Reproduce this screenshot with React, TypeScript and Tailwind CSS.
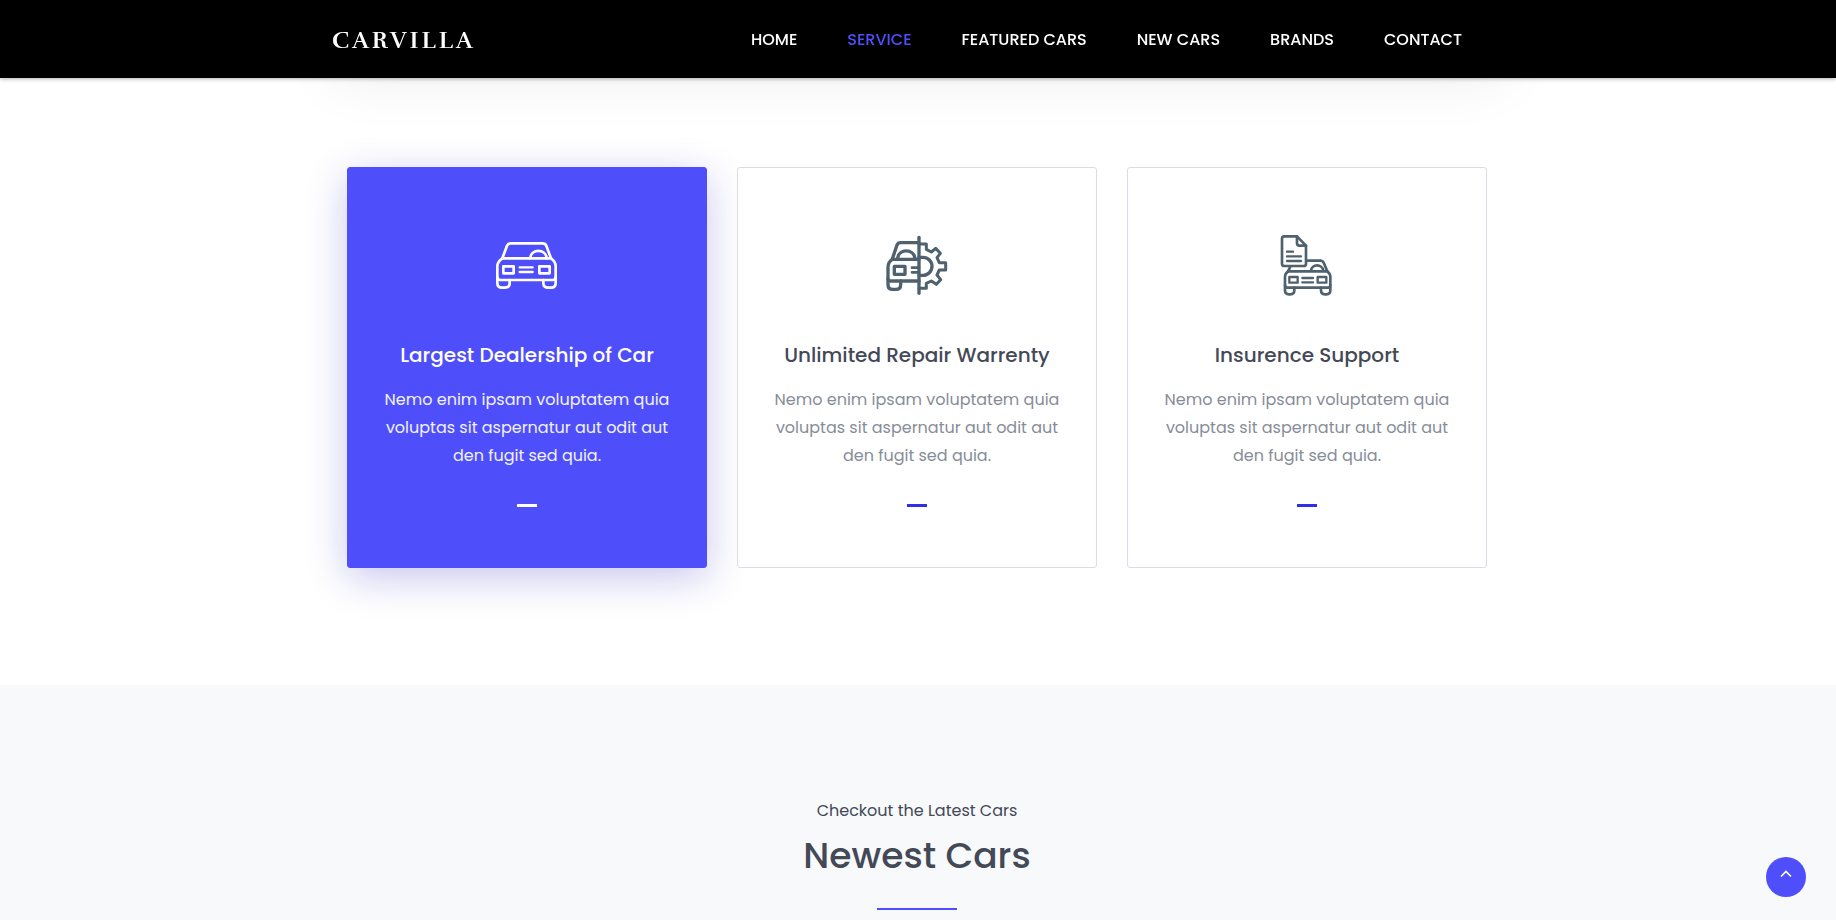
import type { ReactNode } from "react";

const navItems = [
  { label: "home", href: "#home" },
  { label: "service", href: "#service", active: true },
  { label: "featured cars", href: "#featured-cars" },
  { label: "new cars", href: "#new-cars" },
  { label: "brands", href: "#brand" },
  { label: "contact", href: "#contact" },
];

function IconFrame({ children, stroke }: { children: ReactNode; stroke: number }) {
  return (
    <svg
      viewBox="78 45 186 186"
      className="size-[62px]"
      fill="none"
      stroke="currentColor"
      strokeWidth={stroke}
      strokeLinecap="round"
      strokeLinejoin="round"
      aria-hidden="true"
    >
      {children}
    </svg>
  );
}

function CarIcon() {
  return (
    <IconFrame stroke={8}>
      <path d="M97 115 L111 77 Q114 70 122 70 H218 Q226 70 229 77 L243 115" />
      <path d="M97 115 H243 C252 121 257 129 257 139 V172 Q257 180 248 180 H91 Q82 180 82 172 V139 C82 129 88 121 97 115 Z" />
      <path d="M82 172 V189 Q82 203 96 203 H104 Q119 203 119 189 V180 M257 172 V189 Q257 203 243 203 H235 Q220 203 220 189 V180" />
      <path d="M181 115 C182 85 228 85 230 115" />
      <path d="M100 139 H131 V160 H100 Z M208 139 H239 V160 H208 Z" />
      <path d="M149 142 H188 M149 156 H188" strokeWidth="7" />
    </IconFrame>
  );
}

function RepairIcon() {
  return (
    <IconFrame stroke={10}>
      <path d="M97 117 L111 75 Q114 68 122 68 H177" />
      <path d="M177 118 H97 Q84 126 84 142 V176 Q84 183 91 183 H177" />
      <path d="M84 176 V194 Q84 208 98 208 H108 Q122 208 122 194 V183" />
      <path d="M113 115 C116 85 161 85 165 115" />
      <path d="M103 139 H135 V163 H103 Z" />
      <path d="M156 143 H177 M156 157 H177" strokeWidth="8" />
      <path d="M177 52 V220" />
      <path d="M177 72 H199 V88 L214 96 L227 85 L241 100 L231 113 L238 128 H257 V150 H238 L231 165 L242 179 L229 193 L214 183 L199 190 V205 H177" strokeWidth="9" />
      <path d="M177 112 H189 A27 27 0 0 1 189 166 H177" />
    </IconFrame>
  );
}

function InsuranceIcon() {
  return (
    <IconFrame stroke={8}>
      <path d="M141 49 H103 Q96 49 96 56 V131 Q96 138 103 138 H161 Q168 138 168 131 V77 Z" />
      <path d="M141 49 V70 Q141 77 148 77 H168" />
      <path d="M111 95 H129 M111 109 H153 M111 123 H153" strokeWidth="7" />
      <path d="M170 122 H212 Q218 122 221 128 L232 154 M121 140 L114 154" />
      <path d="M114 154 H232 Q241 161 241 171 V196 Q241 203 234 203 H112 Q105 203 105 196 V171 Q105 161 114 154 Z" />
      <path d="M105 196 V211 Q105 223 117 223 H121 Q133 223 133 211 V203 M241 196 V211 Q241 223 229 223 H225 Q213 223 213 211 V203" />
      <path d="M183 152 C185 131 217 131 220 152" />
      <path d="M118 171 H143 V188 H118 Z M203 171 H229 V188 H203 Z M157 174 H189 M157 187 H189" strokeWidth="7" />
    </IconFrame>
  );
}

const services = [
  { title: "Largest Dealership of Car", icon: <CarIcon />, active: true },
  { title: "Unlimited Repair Warrenty", icon: <RepairIcon /> },
  { title: "Insurence Support", icon: <InsuranceIcon /> },
];

type CardProps = { title: string; icon: ReactNode; active?: boolean };

function ServiceCard({ title, icon, active }: CardProps) {
  return (
    <article
      className={
        active
          ? "flex flex-col items-center rounded-[3px] border border-[#4e4ffa] bg-[#4e4ffa] px-6 pt-[67px] pb-[60px] text-center text-white shadow-[0_10px_40px_rgba(14,14,186,0.23)]"
          : "flex flex-col items-center rounded-[3px] border border-[#dcdce9] bg-white px-6 pt-[67px] pb-[60px] text-center text-[#4f616e]"
      }
    >
      {icon}
      <h2 className={active ? "mt-11 text-xl leading-7 font-medium" : "mt-11 text-xl leading-7 font-medium text-[#434956]"}>
        <a href="#service">{title}</a>
      </h2>
      <p className={active ? "mt-[17px] max-w-[290px] leading-7 text-[#f2f2ff]" : "mt-[17px] max-w-[290px] leading-7 text-[#868d99]"}>
        Nemo enim ipsam voluptatem quia voluptas sit aspernatur aut odit aut den fugit sed quia.
      </p>
      <span className={active ? "mt-[34px] h-[3px] w-5 bg-white" : "mt-[34px] h-[3px] w-5 bg-[#2f2fe8]"} />
    </article>
  );
}

export default function App() {
  return (
    <div className="min-h-screen overflow-x-hidden bg-white font-['Poppins','Inter',sans-serif] text-base">
      <header className="fixed inset-x-0 top-0 z-20 bg-black shadow-[0_1px_4px_rgba(0,0,0,0.3)]">
        <div className="mx-auto flex h-[78px] max-w-[1172px] items-center justify-between pt-0.5 pr-[42px]">
          <a
            href="#home"
            className="font-['Rufina','Liberation_Serif',serif] text-2xl font-bold tracking-[3px] text-white uppercase"
          >
            carvilla
          </a>
          <nav aria-label="Main">
            <ul className="flex gap-[50px] font-medium">
              {navItems.map((item) => (
                <li key={item.label}>
                  <a
                    href={item.href}
                    className={item.active ? "text-[#4e4ffa] uppercase" : "text-white uppercase"}
                  >
                    {item.label}
                  </a>
                </li>
              ))}
            </ul>
          </nav>
        </div>
      </header>

      <main>
        <div className="mx-auto h-[67px] max-w-[1170px] rounded-[3px] bg-white shadow-[0_10px_60px_rgba(0,0,0,0.08)]" />
        <section id="service" className="pt-[100px] pb-[117px]">
          <div className="mx-auto grid max-w-[1172px] gap-[30px] pr-[17px] pl-[15px] md:grid-cols-3">
            {services.map((service) => (
              <ServiceCard key={service.title} {...service} />
            ))}
          </div>
        </section>

        <section id="new-cars" className="bg-[#f8f9fb] pt-28 pb-[10px] text-center text-[#434956]">
          <div className="mx-auto max-w-[1172px] pr-0.5">
            <p className="leading-7">
              Checkout <span>the</span> Latest Cars
            </p>
            <h2 className="mt-[7px] text-4xl leading-[48px] font-medium">Newest Cars</h2>
            <div className="mx-auto mt-7 h-0.5 w-20 bg-[#4e4ffa]" />
          </div>
        </section>
      </main>

      <button
        type="button"
        aria-label="Back to top"
        className="fixed right-[30px] bottom-[23px] z-20 flex size-10 items-start justify-center rounded-full bg-[#4e4ffa] pt-3 text-white"
      >
        <svg viewBox="0 0 14 10" className="h-[10px] w-[14px]" fill="none" stroke="currentColor" strokeWidth="1.6" aria-hidden="true">
          <path d="M2 7.5 L7 2.5 L12 7.5" />
        </svg>
      </button>
    </div>
  );
}
